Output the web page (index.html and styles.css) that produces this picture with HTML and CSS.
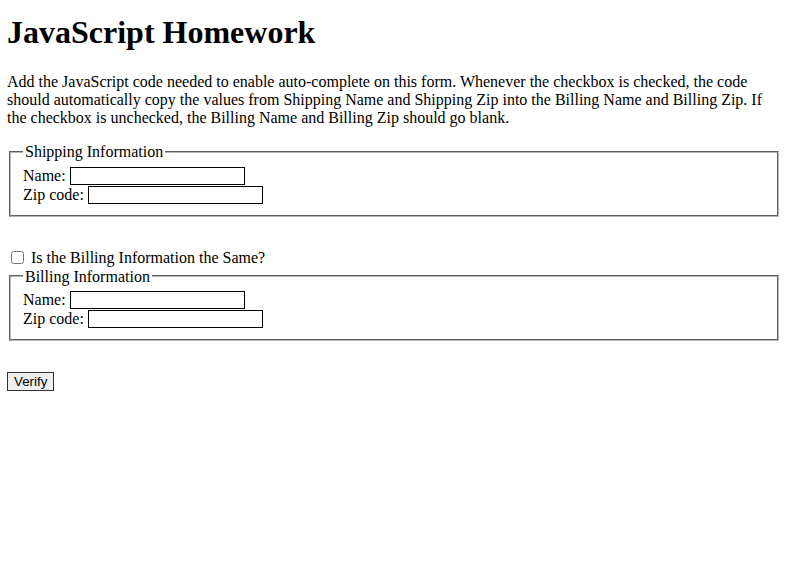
FILE: index.html
```html
<!DOCTYPE html>
<html>
<head>
<meta charset="utf-8">
<title>JavaScript Homework</title>
<link rel="stylesheet" href="styles.css">
</head>
<body>
<h1 class="title">JavaScript Homework</h1>
<p class="intro">Add the JavaScript code needed to enable auto-complete on this form. Whenever the checkbox is checked, the code should automatically copy the values from Shipping Name and Shipping Zip into the Billing Name and Billing Zip. If the checkbox is unchecked, the Billing Name and Billing Zip should go blank.</p>
<form class="form">
  <fieldset class="group">
    <legend class="legend">Shipping Information</legend>
    <div class="row">
      <label class="label" for="shippingName">Name:</label>
      <input class="field" type="text" name="shipName" id="shippingName">
    </div>
    <div class="row">
      <label class="label" for="shippingZip">Zip code:</label>
      <input class="field" type="text" name="shipZip" id="shippingZip">
    </div>
  </fieldset>
  <div class="same-row">
    <input class="check" type="checkbox" id="same" name="same">
    <label class="check-label" for="same">Is the Billing Information the Same?</label>
  </div>
  <fieldset class="group">
    <legend class="legend">Billing Information</legend>
    <div class="row">
      <label class="label" for="billingName">Name:</label>
      <input class="field" type="text" name="billName" id="billingName">
    </div>
    <div class="row">
      <label class="label" for="billingZip">Zip code:</label>
      <input class="field" type="text" name="billZip" id="billingZip">
    </div>
  </fieldset>
  <div class="actions">
    <input class="verify" type="submit" value="Verify">
  </div>
</form>
</body>
</html>
```

FILE: styles.css
```css
html, body {
  background: #ffffff;
}
body {
  margin: 0;
  padding: 8px 8px 8px 7px;
  font-family: "Liberation Serif", "Times New Roman", serif;
  font-size: 16px;
  color: #000;
}
.title {
  font-size: 32px;
  font-weight: bold;
  line-height: 37px;
  margin: 6px 0 22px;
}
.intro {
  margin: 0 0 15px;
  font-size: 16px;
  line-height: 18px;
}
.form {
  margin: 0;
}
.group {
  margin: 0 2px;
  padding: 4.6px 12px 11px;
  border: 2px groove #b4b4b4;
  min-width: 0;
}
.legend {
  padding: 1px 2px 0;
  font-size: 16px;
  line-height: 18px;
}
.row {
  display: flex;
  align-items: flex-start;
  height: 19px;
}
.label {
  padding-top: 2px;
  font-size: 16px;
  line-height: 16px;
  white-space: nowrap;
}
.field {
  box-sizing: border-box;
  width: 175px;
  height: 18px;
  margin: 1px 0 0 4px;
  padding: 0 2px;
  border: 1px solid #000;
  border-radius: 0;
  font-family: "Liberation Sans", Arial, sans-serif;
  font-size: 13px;
  background: #fff;
  outline: none;
}
.same-row {
  display: flex;
  align-items: flex-start;
  margin-top: 32px;
  height: 18px;
  line-height: 18px;
}
.check {
  width: 13px;
  height: 13px;
  margin: 2px 3px 0 4px;
}
.check-label {
  margin-left: 4px;
  font-size: 16px;
}
.actions {
  margin-top: 31px;
}
.verify {
  box-sizing: border-box;
  height: 19px;
  padding: 0 6px;
  margin: 0;
  font-family: "Liberation Sans", Arial, sans-serif;
  font-size: 13.33px;
  line-height: 15px;
  color: #000;
  background: #efefef;
  border: 1px solid #333;
  border-radius: 0;
}
```
